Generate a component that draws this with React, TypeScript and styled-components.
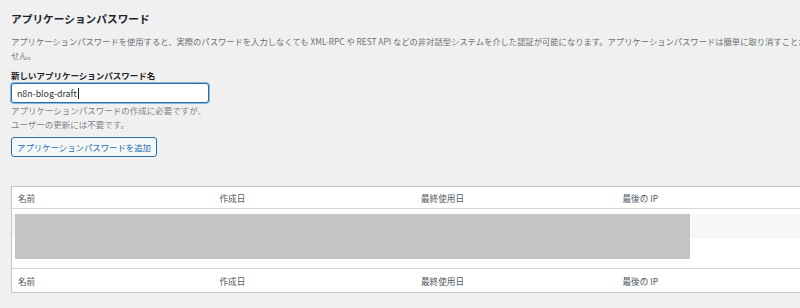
import styled, { createGlobalStyle } from "styled-components";

const GlobalStyle = createGlobalStyle`
  html, body {
    margin: 0;
    padding: 0;
    background: #f0f0f1;
    overflow: hidden;
  }
  body {
    font-family: "Noto Sans CJK JP", "Noto Sans", sans-serif;
    color: #3c434a;
  }
`;

const columns = ["名前", "作成日", "最終使用日", "最後の IP", "取り消し"];

const App = () => {
  return (
    <>
      <GlobalStyle />
      <Section>
        <Title>アプリケーションパスワード</Title>
        <Description>
          <Line>
            アプリケーションパスワードを使用すると、実際のパスワードを入力しなくても XML-RPC や REST API
            などの非対話型システムを介した認証が可能になります。アプリケーションパスワードは簡単に取り消すことができます。サイトへの従来のログインには使用できま
          </Line>
          <br />
          せん。
        </Description>

        <Label htmlFor="new-app-pass">新しいアプリケーションパスワード名</Label>
        <InputBox id="new-app-pass" role="textbox">
          n8n-blog-draft
          <Caret />
        </InputBox>
        <Help>
          アプリケーションパスワードの作成に必要ですが、
          <br />
          ユーザーの更新には不要です。
        </Help>
        <AddButton type="button">アプリケーションパスワードを追加</AddButton>

        <Table>
          <HeadRow>
            {columns.map((c) => (
              <Cell key={c}>{c}</Cell>
            ))}
          </HeadRow>
          <Body>
            <StripeRow />
            <Redacted aria-hidden="true" />
          </Body>
          <FootRow>
            {columns.map((c) => (
              <Cell key={c}>{c}</Cell>
            ))}
          </FootRow>
        </Table>
      </Section>
    </>
  );
};

const Section = styled.div`
  width: 1010px;
  padding: 12px 0 0 11px;
`;

const Title = styled.h2`
  margin: 0;
  font-size: 10.7px;
  line-height: 14px;
  font-weight: 700;
  color: #1d2327;
`;

const Description = styled.p`
  margin: 9px 0 0;
  font-size: 8.3px;
  line-height: 13.7px;
  color: #6b7075;
  white-space: nowrap;
`;

const Line = styled.span`
  white-space: nowrap;
`;

const Label = styled.label`
  display: block;
  margin-top: 7px;
  font-size: 8.5px;
  line-height: 12px;
  font-weight: 700;
  color: #1d2327;
`;

const InputBox = styled.div`
  box-sizing: border-box;
  margin-top: 2px;
  width: 198px;
  height: 20px;
  padding: 0 5px;
  display: flex;
  align-items: center;
  background: #fff;
  border: 1px solid #2271b1;
  border-radius: 3px;
  box-shadow: 0 0 0 1px #8fb4d6;
  font-size: 8.8px;
  color: #2c3338;
`;

const Caret = styled.span`
  display: inline-block;
  width: 1px;
  height: 11px;
  margin-left: 1px;
  background: #1d2327;
`;

const Help = styled.p`
  margin: 0;
  font-size: 8.5px;
  line-height: 14px;
  color: #80848a;
`;

const AddButton = styled.button`
  display: block;
  box-sizing: border-box;
  margin-top: 6px;
  height: 20px;
  width: 146px;
  padding: 0;
  background: #f6f7f7;
  border: 1px solid #2271b1;
  border-radius: 3px;
  font-family: inherit;
  font-size: 8.4px;
  color: #2271b1;
  cursor: pointer;
`;

const Table = styled.div`
  margin-top: 29px;
  width: 1008px;
  background: #fff;
  border: 1px solid #c3c4c7;
  box-shadow: 0 1px 1px rgba(0, 0, 0, 0.04);
`;

const HeadRow = styled.div`
  display: grid;
  grid-template-columns: repeat(5, 201.5px);
  height: 21px;
  border-bottom: 1px solid #d7d8da;
`;

const FootRow = styled(HeadRow)`
  height: 23px;
  border-bottom: none;
  border-top: 1px solid #d7d8da;
`;

const Cell = styled.div`
  display: flex;
  align-items: center;
  padding-left: 6px;
  font-size: 8.6px;
  color: #50575e;
`;

const Body = styled.div`
  position: relative;
  height: 59px;
  padding-top: 5px;
  box-sizing: border-box;
`;

const StripeRow = styled.div`
  height: 24px;
  background: #f6f7f7;
`;

const Redacted = styled.div`
  position: absolute;
  left: 3px;
  top: 5px;
  width: 675px;
  height: 45px;
  background: #c4c4c4;
`;

export default App;
